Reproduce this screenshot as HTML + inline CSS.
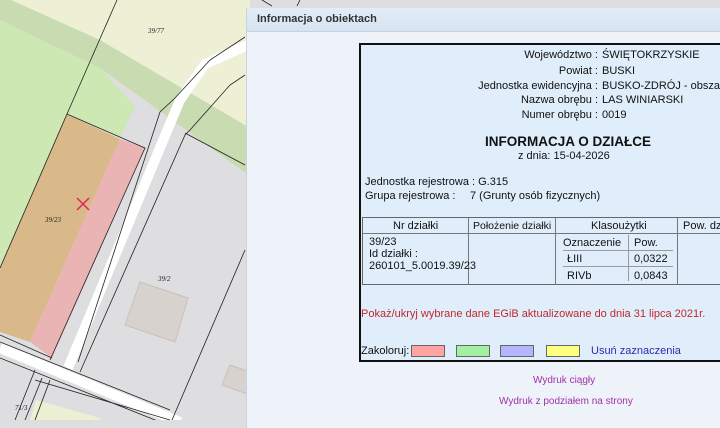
<!DOCTYPE html>
<html><head><meta charset="utf-8"><style>
*{margin:0;padding:0;box-sizing:border-box}
body{width:720px;height:420px;overflow:hidden;position:relative;font-family:"Liberation Sans",Arial,sans-serif;background:#dedde0}
.a{position:absolute;white-space:nowrap;font-size:11px;color:#111;line-height:13px}
#panel{position:absolute;left:246px;top:8px;width:480px;height:420px;background:#eef3f9;border-left:1px solid #c8d3df}
#hdr{position:absolute;left:0;top:0;width:100%;height:24px;background:linear-gradient(#e4edf7,#d6e3f1);border-bottom:1px solid #c5d2e0}
#box{position:absolute;left:359px;top:43px;width:370px;height:319px;background:#e0eefb;border:2px solid #111}
.r{text-align:right;width:240px;left:358px}
.sw{position:absolute;top:345px;width:34px;height:12px;border:1px solid #666}
.ln{position:absolute;background:#777}
</style></head><body>
<svg width="720" height="420" style="position:absolute;left:0;top:0">
<rect width="720" height="420" fill="#dedde0"/>
<polygon points="0,0 250,0 250,128 0,0" fill="#edf0d5"/>
<polygon points="0,-5 100,40 250,128 250,176 100,68 0,20" fill="#c9dbb0"/>
<polygon points="0,20 100,68 135,106 120,138 67,114 0,270" fill="#cde8b3"/>
<polygon points="67,114 120,139 30,342 0,332 0,268" fill="#d9b98a"/>
<polygon points="120,139 145,148 52,358 30,342" fill="#eab4b4"/>
<polygon points="36,400 100,418 100,420 30,420" fill="#edf0d5"/>
<polyline points="248,45 205,64 180,100 68,368" fill="none" stroke="#fff" stroke-width="10"/>
<line x1="0" y1="348" x2="180" y2="422" stroke="#fff" stroke-width="10"/>
<polygon points="140,282 188,298 175,342 125,325" fill="#d8d2cf" stroke="#c8c0bc"/>
<polygon points="230,365 250,372 250,395 222,385" fill="#d8d2cf" stroke="#c8c0bc"/>
<g stroke="#222" stroke-width="0.8" fill="none">
<line x1="117" y1="0" x2="67" y2="114"/>
<polyline points="0,268 67,114 145,148 50,360"/>
<line x1="0" y1="335" x2="52" y2="358"/>
<polyline points="245,37 210,60 175,98 160,112 78,362"/>
<polyline points="245,75 230,85 190,130 185,135 80,372"/>
<line x1="185" y1="133" x2="245" y2="165"/>
<line x1="0" y1="342" x2="170" y2="410"/>
<line x1="0" y1="358" x2="180" y2="430"/>
<line x1="35" y1="380" x2="170" y2="420"/>
<line x1="35" y1="370" x2="15" y2="420"/>
<line x1="42" y1="378" x2="25" y2="420"/>
<line x1="50" y1="380" x2="35" y2="420"/>
<line x1="245" y1="250" x2="172" y2="420"/>
<line x1="262" y1="0" x2="272" y2="6"/>
<line x1="300" y1="0" x2="297" y2="6"/>
</g>
<g font-family="Liberation Serif,serif" font-style="italic" font-size="7" fill="#222">
<text x="148" y="33">39/77</text><text x="45" y="222">39/23</text><text x="158" y="281">39/2</text><text x="15" y="410">71/3</text>
</g>
<g stroke="#e0245e" stroke-width="1.5"><line x1="77" y1="198" x2="89" y2="210"/><line x1="89" y1="198" x2="77" y2="210"/></g>
</svg>
<div id="panel"><div id="hdr"></div></div>
<div class="a" style="left:257px;top:13px;font-weight:bold;color:#333">Informacja o obiektach</div>
<div id="box"></div>
<div class="a r" style="top:49px">Województwo :</div><div class="a" style="left:602px;top:49px">ŚWIĘTOKRZYSKIE</div>
<div class="a r" style="top:65px">Powiat :</div><div class="a" style="left:602px;top:65px">BUSKI</div>
<div class="a r" style="top:80px">Jednostka ewidencyjna :</div><div class="a" style="left:602px;top:80px">BUSKO-ZDRÓJ - obszar</div>
<div class="a r" style="top:94px">Nazwa obrębu :</div><div class="a" style="left:602px;top:94px">LAS WINIARSKI</div>
<div class="a r" style="top:109px">Numer obrębu :</div><div class="a" style="left:602px;top:109px">0019</div>
<div class="a" style="left:485px;top:134px;font-size:13.5px;font-weight:bold;line-height:16px">INFORMACJA O DZIAŁCE</div>
<div class="a" style="left:518px;top:150px">z dnia: 15-04-2026</div>
<div class="a" style="left:365px;top:176px">Jednostka rejestrowa : G.315</div>
<div class="a" style="left:365px;top:190px">Grupa rejestrowa :</div><div class="a" style="left:470px;top:190px">7 (Grunty osób fizycznych)</div>
<div style="position:absolute;left:362px;top:217px;width:370px;height:68px;border:1px solid #666"></div>
<div class="ln" style="left:362px;top:233px;width:370px;height:1px"></div>
<div class="ln" style="left:468px;top:217px;width:1px;height:68px"></div>
<div class="ln" style="left:555px;top:217px;width:1px;height:68px"></div>
<div class="ln" style="left:677px;top:217px;width:1px;height:68px"></div>
<div class="a" style="left:393px;top:220px">Nr działki</div>
<div class="a" style="left:473px;top:220px;font-size:10.5px">Położenie działki</div>
<div class="a" style="left:591px;top:220px">Klasoużytki</div>
<div class="a" style="left:683px;top:220px">Pow. dz</div>
<div class="a" style="left:369px;top:236px;line-height:12px">39/23<br>Id działki :<br>260101_5.0019.39/23</div>
<div class="a" style="left:563px;top:237px">Oznaczenie</div><div class="a" style="left:634px;top:237px">Pow.</div>
<div class="a" style="left:567px;top:253px">ŁIII</div><div class="a" style="left:634px;top:253px">0,0322</div>
<div class="a" style="left:567px;top:270px">RIVb</div><div class="a" style="left:634px;top:270px">0,0843</div>
<div class="ln" style="left:563px;top:250px;width:110px;height:1px;background:#999"></div>
<div class="ln" style="left:563px;top:266px;width:110px;height:1px;background:#999"></div>
<div class="ln" style="left:628px;top:235px;width:1px;height:46px;background:#999"></div>
<div class="a" style="left:361px;top:308px;color:#c0282d">Pokaż/ukryj wybrane dane EGiB aktualizowane do dnia 31 lipca 2021r.</div>
<div class="a" style="left:361px;top:345px">Zakoloruj:</div>
<div class="sw" style="left:411px;background:#ffa3a3"></div>
<div class="sw" style="left:456px;background:#a3f0a3"></div>
<div class="sw" style="left:500px;background:#b4b4ff"></div>
<div class="sw" style="left:546px;background:#ffff80"></div>
<div class="a" style="left:591px;top:345px;color:#2b2ba8">Usuń zaznaczenia</div>
<div class="a" style="left:533px;top:374px;font-size:10px;color:#a030a8">Wydruk ciągły</div>
<div class="a" style="left:499px;top:395px;font-size:10px;color:#a030a8">Wydruk z podziałem na strony</div>
</body></html>
